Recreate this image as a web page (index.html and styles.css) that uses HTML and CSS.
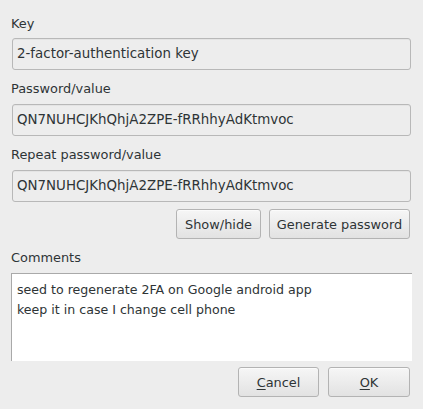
FILE: index.html
```html
<!DOCTYPE html>
<html>
<head>
<meta charset="utf-8">
<link rel="stylesheet" href="styles.css">
</head>
<body>
<div class="dialog">
  <div class="field first">
    <div class="label">Key</div>
    <div class="entry">2-factor-authentication key</div>
  </div>
  <div class="field">
    <div class="label">Password/value</div>
    <div class="entry">QN7NUHCJKhQhjA2ZPE-fRRhhyAdKtmvoc</div>
  </div>
  <div class="field">
    <div class="label">Repeat password/value</div>
    <div class="entry">QN7NUHCJKhQhjA2ZPE-fRRhhyAdKtmvoc</div>
  </div>
  <div class="row pw-buttons">
    <button class="btn btn-show">Show/hide</button>
    <button class="btn btn-gen">Generate password</button>
  </div>
  <div class="field comments">
    <div class="label">Comments</div>
    <div class="textarea">seed to regenerate 2FA on Google android app<br>keep it in case I change cell phone</div>
  </div>
  <div class="row actions">
    <button class="btn btn-cancel"><span class="mn">C</span>ancel</button>
    <button class="btn btn-ok"><span class="mn">O</span>K</button>
  </div>
</div>
</body>
</html>
```

FILE: styles.css
```css
html, body {
  margin: 0;
  padding: 0;
  background: #ededed;
}
body {
  font-family: "DejaVu Sans", sans-serif;
  font-size: 13.4px;
  color: #2e3436;
  width: 423px;
  height: 409px;
  overflow: hidden;
}
.dialog {
  display: flex;
  flex-direction: column;
  padding: 0 12px;
}
.field {
  display: flex;
  flex-direction: column;
  margin-top: 11px;
}
.field.first {
  margin-top: 16px;
}
.label {
  font-size: 12.9px;
  line-height: 16px;
  height: 16px;
  margin-bottom: 7px;
  margin-left: -1px;
}
.field.first .label {
  margin-bottom: 6px;
}
.entry {
  box-sizing: border-box;
  height: 32px;
  border: 1px solid #b8b8b8;
  border-radius: 3px;
  background: #ededed;
  line-height: 30px;
  padding-left: 4px;
  white-space: nowrap;
  box-shadow: inset 0 1px 0 #e4e4e4;
}
.row {
  display: flex;
  justify-content: flex-end;
}
.pw-buttons {
  margin-top: 7px;
  gap: 8px;
  margin-right: 1px;
}
.btn {
  box-sizing: border-box;
  height: 30px;
  font-family: "DejaVu Sans", sans-serif;
  font-size: 12.9px;
  color: #2e3436;
  border: 1px solid #b3b3b3;
  border-radius: 3px;
  background: linear-gradient(#f6f6f6, #e2e2e2);
  padding: 0;
  margin: 0;
  box-shadow: inset 0 1px 0 #fbfbfb;
}
.btn-show { width: 85px; }
.btn-gen { width: 141px; }
.btn-cancel { width: 81px; }
.btn-ok { width: 82px; }
.mn {
  text-decoration: underline;
  text-underline-offset: 2px;
}
.comments {
  margin-top: 11px;
}
.textarea {
  box-sizing: border-box;
  height: 88px;
  margin: 0 -1px;
  background: #ffffff;
  border-top: 1px solid #a9a9a9;
  border-left: 1px solid #a9a9a9;
  padding: 6px 0 0 5px;
  font-size: 12.6px;
  line-height: 20px;
}
.actions {
  margin-top: 6px;
  gap: 9px;
  margin-right: 1px;
}
```
